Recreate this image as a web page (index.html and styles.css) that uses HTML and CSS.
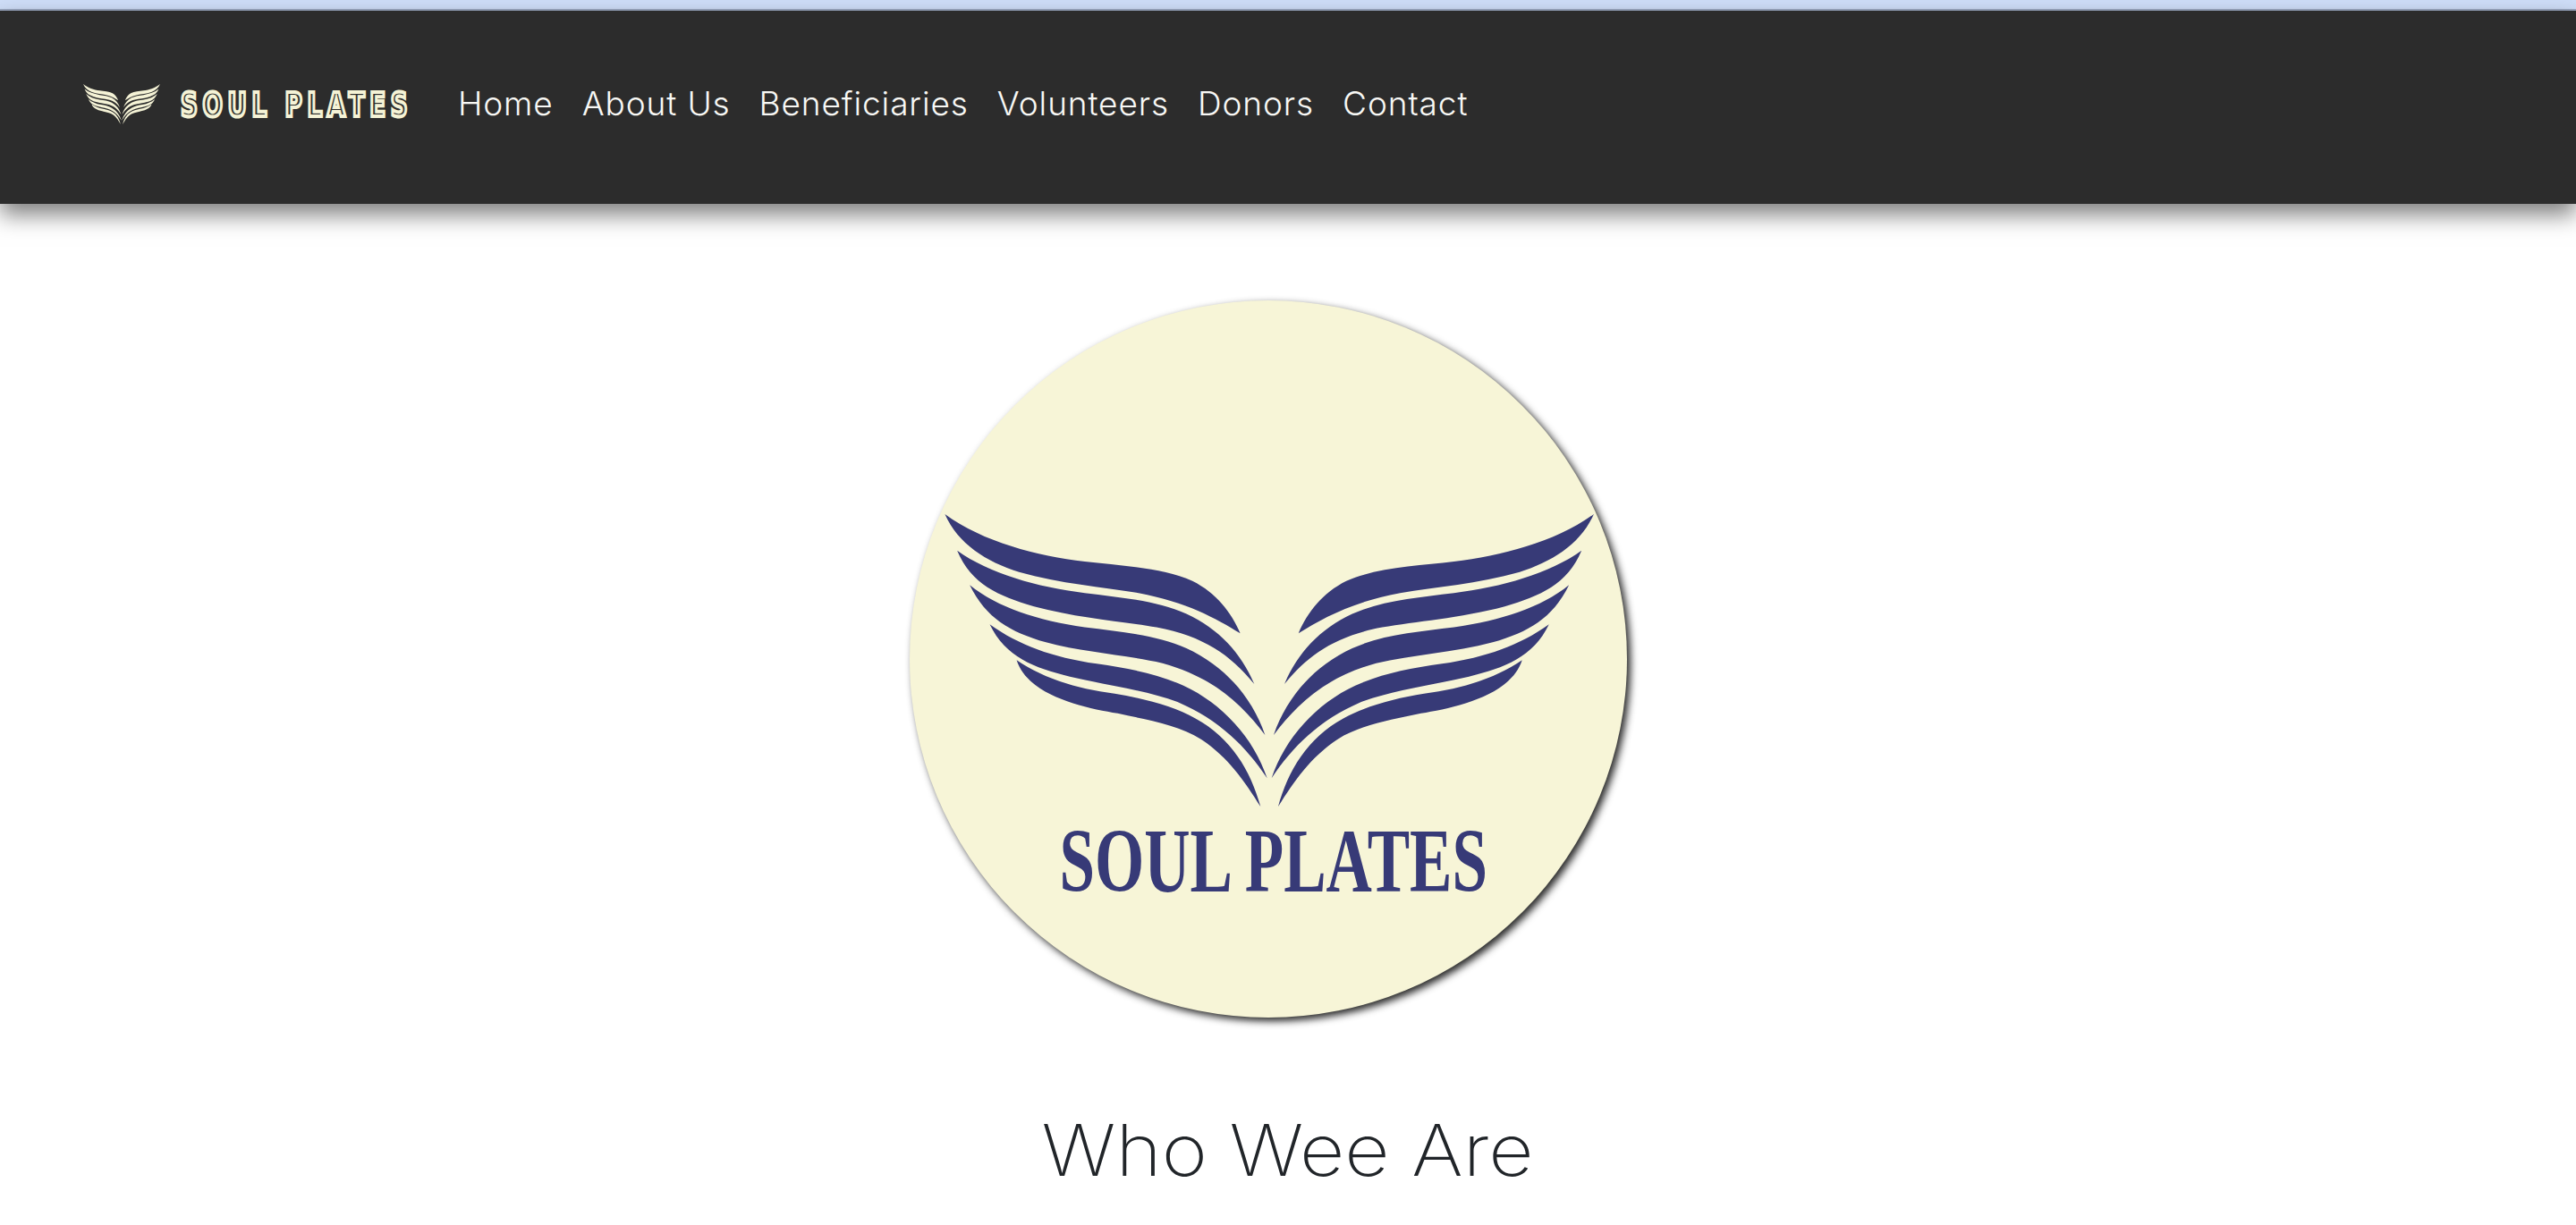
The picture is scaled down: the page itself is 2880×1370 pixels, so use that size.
FILE: index.html
```html
<!DOCTYPE html>
<html lang="en">
<head>
<meta charset="utf-8">
<title>Soul Plates</title>
<link rel="stylesheet" href="styles.css">
</head>
<body>
<svg class="defs" width="0" height="0" aria-hidden="true">
  <defs>
    <g id="wing">
      <path d="M172 106C300 200 480 245 640 265C760 279 900 285 1000 330C1080 370 1130 435 1160 505C1080 455 980 400 820 370C700 350 560 340 420 300C310 265 215 205 172 106Z"/>
      <path d="M213 228C320 305 480 350 640 370C760 385 880 395 980 440C1090 490 1165 575 1207 675C1130 580 1040 515 880 485C770 465 620 455 470 415C350 380 260 340 213 228Z"/>
      <path d="M255 343C350 420 480 460 640 485C760 500 880 510 980 555C1110 615 1200 720 1243 845C1170 750 1080 655 900 605C780 577 640 570 510 535C390 500 310 455 255 343Z"/>
      <path d="M322 475C420 545 530 585 680 607C790 623 880 640 970 680C1100 740 1205 855 1250 990C1180 885 1090 795 950 735C850 697 720 680 590 650C470 620 375 585 322 475Z"/>
      <path d="M412 595C500 655 610 690 740 707C840 723 940 750 1010 790C1130 855 1195 965 1228 1085C1175 1000 1120 920 1030 860C950 810 850 795 750 773C640 755 450 715 412 595Z"/>
    </g>
    <g id="wings">
      <use href="#wing"/>
      <use href="#wing" transform="translate(2515 0) scale(-1 1)"/>
    </g>
  </defs>
</svg>
<div class="topbar"></div>
<header class="navbar">
  <a class="brand" href="#">
    <svg class="brand-mark" viewBox="172 106 2171 979" preserveAspectRatio="none" aria-hidden="true"><use href="#wings"/></svg>
    <span class="brand-name">SOUL PLATES</span>
  </a>
  <nav class="nav">
    <a href="#">Home</a>
    <a href="#">About Us</a>
    <a href="#">Beneficiaries</a>
    <a href="#">Volunteers</a>
    <a href="#">Donors</a>
    <a href="#">Contact</a>
  </nav>
</header>
<main class="content">
  <div class="logo-circle">
    <svg class="logo-art" viewBox="0 0 800 800" role="img" aria-label="Soul Plates logo">
      <g transform="translate(-18 203) scale(0.33333)"><use href="#wings"/></g>
      <text class="logo-word" transform="translate(167 659) scale(0.702 1)">SOUL PLATES</text>
    </svg>
  </div>
  <h1 class="title">Who Wee Are</h1>
</main>
</body>
</html>
```
FILE: styles.css
```css
* { box-sizing: border-box; }
html, body { margin: 0; padding: 0; height: 100%; overflow: hidden; background: #fff; }
body { font-family: "Inter", "Liberation Sans", sans-serif; }
.defs { position: absolute; }
.topbar { height: 12px; background: #cfdef8; border-bottom: 2px solid #9ca9c2; }
.navbar {
  height: 216px;
  background: #2c2c2c;
  display: flex;
  align-items: flex-start;
  padding: 81px 0 0 93px;
  box-shadow: 0 12px 24px rgba(0, 0, 0, 0.5);
  position: relative;
}
.brand { display: flex; align-items: center; gap: 23px; text-decoration: none; height: 46px; }
.brand-mark { width: 86px; height: 45px; fill: #f5f3d6; display: block; flex: none; }
.brand-name {
  display: block;
  flex: none;
  width: 253px;
  margin-top: 4px;
  white-space: nowrap;
  font-family: "DejaVu Sans", "Liberation Sans", sans-serif;
  font-weight: 700;
  font-size: 36.5px;
  line-height: 46px;
  letter-spacing: 7.8px;
  color: #2c2c2c;
  -webkit-text-stroke: 4px #f5f3d6;
  transform: scaleX(0.72);
  transform-origin: left center;
}
.nav { display: flex; gap: 32px; margin-left: 57px; height: 46px; align-items: center; }
.nav a { color: #f8f8f5; text-decoration: none; font-size: 37px; font-weight: 300; line-height: 46px; letter-spacing: 0.9px; }
.content { display: flex; flex-direction: column; align-items: center; padding-top: 108px; }
.logo-circle {
  width: 802px;
  height: 802px;
  border-radius: 50%;
  background: #f7f5d7;
  box-shadow: 4px 4px 8px rgba(0, 0, 0, 0.85);
  margin-right: 44px;
}
.logo-art { width: 100%; height: 100%; display: block; fill: #373a77; }
.logo-word { font-family: "Liberation Serif", serif; font-weight: 700; font-size: 101px; }
.title {
  margin: 100px 0 0;
  font-size: 80px;
  font-weight: 200;
  line-height: 1.2;
  color: #212529;
  transform: scaleX(1.093);
}
```
